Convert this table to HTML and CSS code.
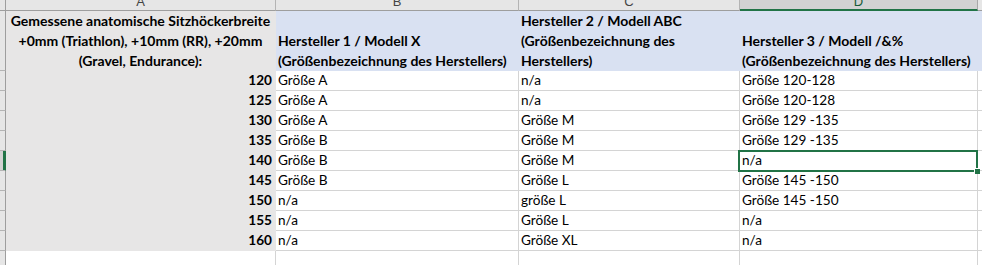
FILE: index.html
```html
<!DOCTYPE html>
<html lang="de">
<head>
<meta charset="utf-8">
<title>Sitzhöckerbreite – Größentabelle</title>
<link rel="stylesheet" href="styles.css">
</head>
<body>
<div class="sheet">
  <!-- column headers -->
  <div class="corner"></div>
  <div class="colhead"><span>A</span></div>
  <div class="colhead"><span>B</span></div>
  <div class="colhead"><span>C</span></div>
  <div class="colhead colhead-active"><span>D</span></div>
  <div class="colhead colhead-rest"></div>

  <!-- row 1: table heading -->
  <div class="rowhead rowhead-tall"></div>
  <div class="cell grey title">Gemessene anatomische Sitzhöckerbreite<br>+0mm (Triathlon), +10mm (RR), +20mm<br>(Gravel, Endurance):</div>
  <div class="cell blue heading"><span>Hersteller 1 / Modell X</span><span>(Größenbezeichnung des Herstellers)</span></div>
  <div class="cell blue heading"><span>Hersteller 2 / Modell ABC</span><span>(Größenbezeichnung des</span><span>Herstellers)</span></div>
  <div class="cell blue heading"><span>Hersteller 3 / Modell /&amp;%</span><span>(Größenbezeichnung des Herstellers)</span></div>
  <div class="cell blue"></div>

  <div class="rowhead"></div>
  <div class="cell grey num">120</div>
  <div class="cell">Größe A</div>
  <div class="cell">n/a</div>
  <div class="cell">Größe 120-128</div>
  <div class="cell"></div>

  <div class="rowhead"></div>
  <div class="cell grey num">125</div>
  <div class="cell">Größe A</div>
  <div class="cell">n/a</div>
  <div class="cell">Größe 120-128</div>
  <div class="cell"></div>

  <div class="rowhead"></div>
  <div class="cell grey num">130</div>
  <div class="cell">Größe A</div>
  <div class="cell">Größe M</div>
  <div class="cell">Größe 129 -135</div>
  <div class="cell"></div>

  <div class="rowhead"></div>
  <div class="cell grey num">135</div>
  <div class="cell">Größe B</div>
  <div class="cell">Größe M</div>
  <div class="cell">Größe 129 -135</div>
  <div class="cell"></div>

  <div class="rowhead rowhead-active"></div>
  <div class="cell grey num">140</div>
  <div class="cell">Größe B</div>
  <div class="cell">Größe M</div>
  <div class="cell selected">n/a</div>
  <div class="cell"></div>

  <div class="rowhead"></div>
  <div class="cell grey num">145</div>
  <div class="cell">Größe B</div>
  <div class="cell">Größe L</div>
  <div class="cell">Größe 145 -150</div>
  <div class="cell"></div>

  <div class="rowhead"></div>
  <div class="cell grey num">150</div>
  <div class="cell">n/a</div>
  <div class="cell">größe L</div>
  <div class="cell">Größe 145 -150</div>
  <div class="cell"></div>

  <div class="rowhead"></div>
  <div class="cell grey num">155</div>
  <div class="cell">n/a</div>
  <div class="cell">Größe L</div>
  <div class="cell">n/a</div>
  <div class="cell"></div>

  <div class="rowhead"></div>
  <div class="cell grey num">160</div>
  <div class="cell">n/a</div>
  <div class="cell">Größe XL</div>
  <div class="cell">n/a</div>
  <div class="cell"></div>

  <div class="rowhead"></div>
  <div class="cell"></div>
  <div class="cell"></div>
  <div class="cell"></div>
  <div class="cell"></div>
  <div class="cell"></div>
</div>
</body>
</html>
```

FILE: styles.css
```css
html, body {
  margin: 0;
  padding: 0;
  background: #ffffff;
  overflow: hidden;
}

.sheet {
  display: grid;
  grid-template-columns: 6px 270px 243px 221px 238px 1fr;
  grid-template-rows: 11px 60px repeat(9, 20px) 20px;
  width: 982px;
  font-family: Lato, "Liberation Sans", sans-serif;
  font-size: 13.6px;
  color: #000000;
}

/* column header strip */
.corner {
  background: #e6e6e6;
  border-right: 1px solid #9e9e9e;
  border-bottom: 1px solid #9e9e9e;
}

.colhead {
  background: #e6e6e6;
  border-right: 1px solid #b4b4b4;
  border-bottom: 1px solid #9e9e9e;
  display: flex;
  justify-content: center;
  align-items: flex-end;
  overflow: hidden;
  font-family: "Liberation Sans", Arial, sans-serif;
  font-size: 13px;
  color: #444444;
}

.colhead span {
  line-height: 13px;
  margin-bottom: 2px;
}

.colhead-active {
  background: #d2d2d2;
  border-bottom: 2px solid #217346;
  border-right-color: #a8a8a8;
  color: #185c37;
}

.colhead-active span {
  margin-bottom: 1px;
}

.colhead-rest {
  border-right: none;
}

/* row header strip */
.rowhead {
  background: #e6e6e6;
  border-right: 1px solid #9e9e9e;
  border-bottom: 1px solid #b4b4b4;
}

.rowhead-active {
  background: #d2d2d2;
  box-shadow: inset -2px 0 0 #217346;
  border-right-color: #217346;
}

/* cells */
.cell {
  display: flex;
  align-items: flex-end;
  padding: 0 2px;
  line-height: 19px;
  white-space: nowrap;
  overflow: visible;
  border-right: 1px solid #d4d4d4;
  border-bottom: 1px solid #d4d4d4;
}

.grey {
  background: #e7e6e6;
  border-color: #e7e6e6;
}

.blue {
  background: #d9e1f2;
  border-color: #d9e1f2;
}

.title,
.heading {
  font-weight: bold;
  font-size: 14px;
  line-height: 20px;
  border-bottom: none;
}

.title {
  justify-content: center;
  text-align: center;
}

.heading {
  flex-direction: column;
  justify-content: flex-end;
  align-items: flex-start;
}

.num {
  justify-content: flex-end;
  font-weight: bold;
  padding-right: 3px;
}

/* active cell frame with fill handle */
.selected {
  position: relative;
}

.selected::after {
  content: "";
  position: absolute;
  top: -1px;
  left: -2px;
  right: -1px;
  bottom: -2px;
  border: 2px solid #217346;
  pointer-events: none;
}

.selected::before {
  content: "";
  position: absolute;
  right: -3px;
  bottom: -4px;
  width: 5px;
  height: 5px;
  background: #217346;
  border: 1px solid #ffffff;
  border-right: none;
  border-bottom: none;
  z-index: 1;
}
```
